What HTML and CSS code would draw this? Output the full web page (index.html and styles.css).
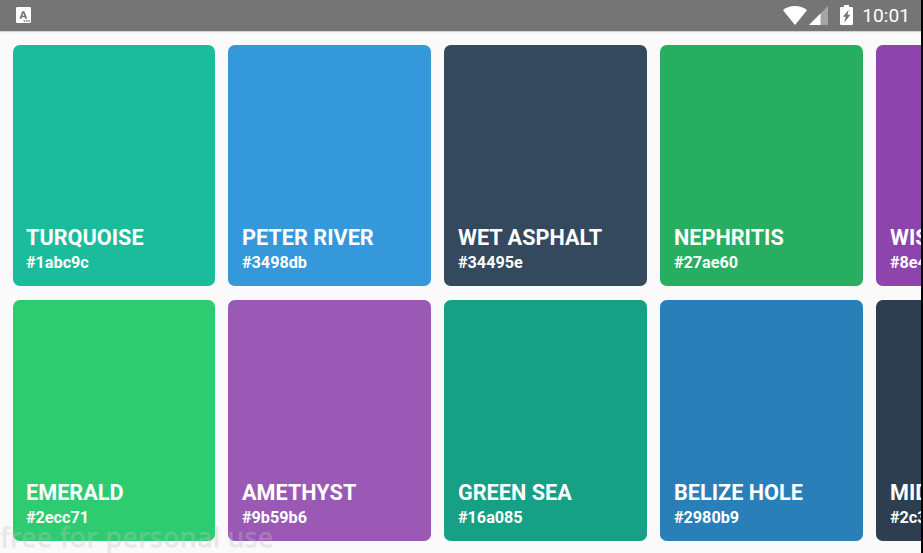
FILE: index.html
```html
<!DOCTYPE html>
<html lang="en">
<head>
<meta charset="utf-8">
<title>Colors</title>
<link rel="stylesheet" href="styles.css">
</head>
<body>
<div class="screen">
  <header class="status">
    <svg class="app-icon" viewBox="0 0 15 16"><rect width="15" height="16" rx="1.2" fill="#fff"/><path fill-rule="evenodd" d="M3.4 11.8 6.2 4.2H8.4L11.2 11.8H9.2L8.7 10.3H5.9L5.4 11.8zM6.4 8.8H8.2L7.3 6.1z" fill="#757575"/><path d="M7.6 13.3h1.5v1.5H7.6zM10 13.3h1.5v1.5H10zM12.4 13.3h1.5v1.5h-1.5z" fill="#757575"/></svg>
    <div class="indicators">
      <svg class="wifi" viewBox="0 0 24 19"><path d="M0 4.2Q5.2 0 12 0t12 4.2L12 19z" fill="#fff"/></svg>
      <svg class="signal" viewBox="0 0 19 19"><path d="M0 19 19 0v19z" fill="#a5a5a5"/><path d="M0 19 11.5 7.5V19z" fill="#fff"/></svg>
      <svg class="battery" viewBox="0 0 13 20"><path d="M4 0h5v2h2.7Q13 2 13 3.3v15.4Q13 20 11.7 20H1.3Q0 20 0 18.7V3.3Q0 2 1.3 2H4z" fill="#fff"/><path d="M8.8 4.7 2.8 11.8H5.7L4.2 17.8 10.4 9.8H7.4z" fill="#757575"/></svg>
      <span class="clock">10:01</span>
    </div>
  </header>
  <main class="grid">
    <article class="card turquoise"><h2>TURQUOISE</h2><p>#1abc9c</p></article>
    <article class="card emerald"><h2>EMERALD</h2><p>#2ecc71</p></article>
    <article class="card peter-river"><h2>PETER RIVER</h2><p>#3498db</p></article>
    <article class="card amethyst"><h2>AMETHYST</h2><p>#9b59b6</p></article>
    <article class="card wet-asphalt"><h2>WET ASPHALT</h2><p>#34495e</p></article>
    <article class="card green-sea"><h2>GREEN SEA</h2><p>#16a085</p></article>
    <article class="card nephritis"><h2>NEPHRITIS</h2><p>#27ae60</p></article>
    <article class="card belize-hole"><h2>BELIZE HOLE</h2><p>#2980b9</p></article>
    <article class="card wisteria"><h2>WISTERIA</h2><p>#8e44ad</p></article>
    <article class="card midnight-blue"><h2>MIDNIGHT BLUE</h2><p>#2c3e50</p></article>
  </main>
  <div class="watermark">free for personal use</div>
</div>
</body>
</html>
```
FILE: styles.css
```css
* { box-sizing: border-box; }
body { margin: 0; background: #000; font-family: Roboto, sans-serif; overflow: hidden; }
.screen { position: relative; width: 921px; height: 553px; background: #fafafa; overflow: hidden; }
.status { display: flex; align-items: center; justify-content: space-between; height: 31px; padding: 0 11px 0 16px; background: #757575; box-shadow: 0 1px 1px rgba(0, 0, 0, .15); }
.app-icon { width: 15px; height: 16px; margin-top: -1px; }
.indicators { display: flex; align-items: center; height: 31px; }
.wifi { width: 24px; height: 19px; margin-top: -1px; }
.signal { width: 19px; height: 19px; margin: -1px 0 0 2.5px; }
.battery { width: 13px; height: 20px; margin: -1px 0 0 11.5px; }
.clock { margin-left: 9.3px; color: #fff; font-size: 19.2px; line-height: 31px; }
.grid { display: grid; grid-auto-flow: column; grid-template-rows: 241px 241px; grid-auto-columns: 202.4px; gap: 13.8px 13.6px; padding: 13.9px 12.5px; }
.card { display: flex; flex-direction: column; justify-content: flex-end; padding: 13.5px 13.5px 12.7px; border-radius: 6.75px; color: #fff; overflow: hidden; white-space: nowrap; }
.card h2 { margin: 0; font-size: 21.65px; font-weight: 700; line-height: 26px; letter-spacing: .02px; }
.card p { margin: 0; font-size: 16.2px; font-weight: 700; line-height: 20px; margin-top: 2.5px; }
.turquoise { background: #1abc9c; }
.emerald { background: #2ecc71; }
.peter-river { background: #3498db; }
.amethyst { background: #9b59b6; }
.wet-asphalt { background: #34495e; }
.green-sea { background: #16a085; }
.nephritis { background: #27ae60; }
.belize-hole { background: #2980b9; }
.wisteria { background: #8e44ad; }
.midnight-blue { background: #2c3e50; }
.watermark { position: absolute; left: 0; top: 518px; font: 500 27px/38px "Noto Sans", "Open Sans", sans-serif; letter-spacing: .23px; color: rgba(205, 205, 205, .28); -webkit-text-stroke: .4px rgba(205, 205, 205, .2); text-shadow: 1px 1px 1px rgba(130, 130, 130, .08); white-space: nowrap; }
```
